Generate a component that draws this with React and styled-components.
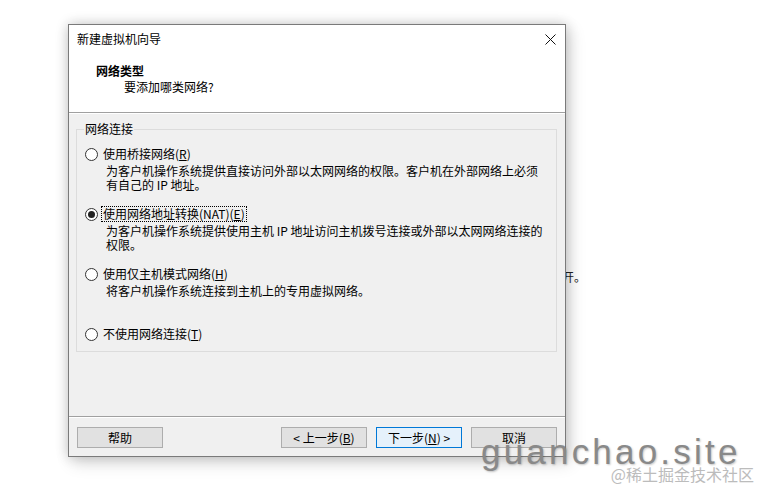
import styled, { createGlobalStyle } from "styled-components"

const GlobalStyle = createGlobalStyle`
    html, body {
        margin: 0;
        padding: 0;
        background: #fff;
    }
    body {
        font-family: "Noto Sans CJK SC", "Liberation Sans", sans-serif;
        font-size: 12px;
        color: #000;
    }
`

const Page = styled.div`
    position: relative;
    width: 761px;
    height: 492px;
    overflow: hidden;
    background: #fff;
`

// text of the window behind the dialog, only its tail shows
const Backdrop = styled.div`
    padding: 270px 0 0 562px;
    line-height: 14px;
    color: #222;
`

const Dialog = styled.div`
    position: absolute;
    left: 68px;
    top: 24px;
    width: 498px;
    height: 433px;
    box-sizing: border-box;
    display: flex;
    flex-direction: column;
    background: #f0f0f0;
    border: 1px solid #7a7a7a;
    box-shadow: 0 0 12px rgba(0, 0, 0, 0.2), 4px 6px 16px rgba(0, 0, 0, 0.14);
`

const Header = styled.div`
    height: 88px;
    box-sizing: border-box;
    background: #fff;
    border-bottom: 1px solid #a0a0a0;
`

const TitleBar = styled.div`
    height: 28px;
    display: flex;
    align-items: center;
    justify-content: space-between;
    padding: 0 9px 0 8px;
    line-height: 14px;
`

const Heading = styled.div`
    margin: 11px 0 0 27px;
    font-weight: bold;
    line-height: 14px;
`

const SubHeading = styled.div`
    margin: 2px 0 0 55px;
    line-height: 14px;
`

const Content = styled.div`
    flex: 1;
    padding: 8px 8px 0 7px;
    border-top: 1px solid #fff;
`

const Group = styled.fieldset`
    margin: 0;
    padding: 11px 8px 10px 8px;
    border: 1px solid #dcdcdc;
    min-width: 0;
`

const GroupLabel = styled.legend`
    padding: 0 1px;
    margin-left: -1px;
    line-height: 14px;
`

const Option = styled.div`
    height: 60px;
    &:last-child {
        height: auto;
    }
`

const RadioRow = styled.label`
    display: flex;
    align-items: center;
    gap: 4px;
    height: 14px;
    line-height: 14px;
`

const Radio = styled.span`
    width: 11px;
    height: 11px;
    border-radius: 50%;
    border: 1px solid #333;
    background: #fff;
    display: flex;
    align-items: center;
    justify-content: center;
    flex-shrink: 0;

    &::after {
        content: "";
        width: 7px;
        height: 7px;
        border-radius: 50%;
        background: ${(p) => (p.$checked ? "#222" : "transparent")};
    }
`

const RadioText = styled.span`
    padding: 0 1px;
    outline: ${(p) => (p.$focused ? "1px dotted #000" : "none")};
    outline-offset: 0;
`

const Desc = styled.div`
    margin-top: 3px;
    padding-left: 21px;
    line-height: 14px;
`

const Footer = styled.div`
    display: flex;
    align-items: center;
    gap: 9px;
    padding: 10px 8px 8px;
    border-top: 1px solid #a0a0a0;
    box-shadow: inset 0 1px 0 #fff;
`

const Button = styled.button`
    width: 86px;
    height: 21px;
    padding: 0;
    font-family: inherit;
    font-size: 12px;
    line-height: 14px;
    color: #000;
    background: ${(p) => (p.$primary ? "#e5f1fb" : "#e1e1e1")};
    border: 1px solid ${(p) => (p.$primary ? "#0078d7" : "#adadad")};
    margin-left: ${(p) => (p.$push ? "auto" : "0")};
`

const Watermark = styled.div`
    position: absolute;
    left: 481px;
    top: 434px;
    font-family: "Liberation Sans", Arial, sans-serif;
    font-size: 35px;
    line-height: 35px;
    letter-spacing: 3.2px;
    color: #898989;
    text-shadow: 1px 1px 2px rgba(0, 0, 0, 0.22);
`

const Credit = styled.div`
    position: absolute;
    right: 7px;
    top: 466px;
    font-size: 16px;
    line-height: 16px;
    color: #bcbcbc;
`

const CloseIcon = () => (
    <svg width="11" height="11" viewBox="0 0 11 11">
        <path d="M0.5 0.5 L10.5 10.5 M10.5 0.5 L0.5 10.5" stroke="#111" strokeWidth="1" />
    </svg>
)

const options = [
    {
        label: <>使用桥接网络(<u>R</u>)</>,
        desc: ["为客户机操作系统提供直接访问外部以太网网络的权限。客户机在外部网络上必须", "有自己的 IP 地址。"],
    },
    {
        label: <>使用网络地址转换(NAT)(<u>E</u>)</>,
        desc: ["为客户机操作系统提供使用主机 IP 地址访问主机拨号连接或外部以太网网络连接的", "权限。"],
        checked: true,
    },
    {
        label: <>使用仅主机模式网络(<u>H</u>)</>,
        desc: ["将客户机操作系统连接到主机上的专用虚拟网络。"],
    },
    {
        label: <>不使用网络连接(<u>T</u>)</>,
        desc: [],
    },
]

const App = () => {
    return (
        <Page>
            <GlobalStyle />
            <Backdrop>开。</Backdrop>
            <Dialog>
                <Header>
                    <TitleBar>
                        <span>新建虚拟机向导</span>
                        <CloseIcon />
                    </TitleBar>
                    <Heading>网络类型</Heading>
                    <SubHeading>要添加哪类网络?</SubHeading>
                </Header>
                <Content>
                    <Group>
                        <GroupLabel>网络连接</GroupLabel>
                        {options.map((o, i) => (
                            <Option key={i}>
                                <RadioRow>
                                    <Radio $checked={o.checked} />
                                    <RadioText $focused={o.checked}>{o.label}</RadioText>
                                </RadioRow>
                                {o.desc.length > 0 && (
                                    <Desc>
                                        {o.desc.map((line, j) => (
                                            <div key={j}>{line}</div>
                                        ))}
                                    </Desc>
                                )}
                            </Option>
                        ))}
                    </Group>
                </Content>
                <Footer>
                    <Button>帮助</Button>
                    <Button $push>&lt; 上一步(<u>B</u>)</Button>
                    <Button $primary>下一步(<u>N</u>) &gt;</Button>
                    <Button>取消</Button>
                </Footer>
            </Dialog>
            <Watermark>guanchao.site</Watermark>
            <Credit>@稀土掘金技术社区</Credit>
        </Page>
    )
}

export default App
